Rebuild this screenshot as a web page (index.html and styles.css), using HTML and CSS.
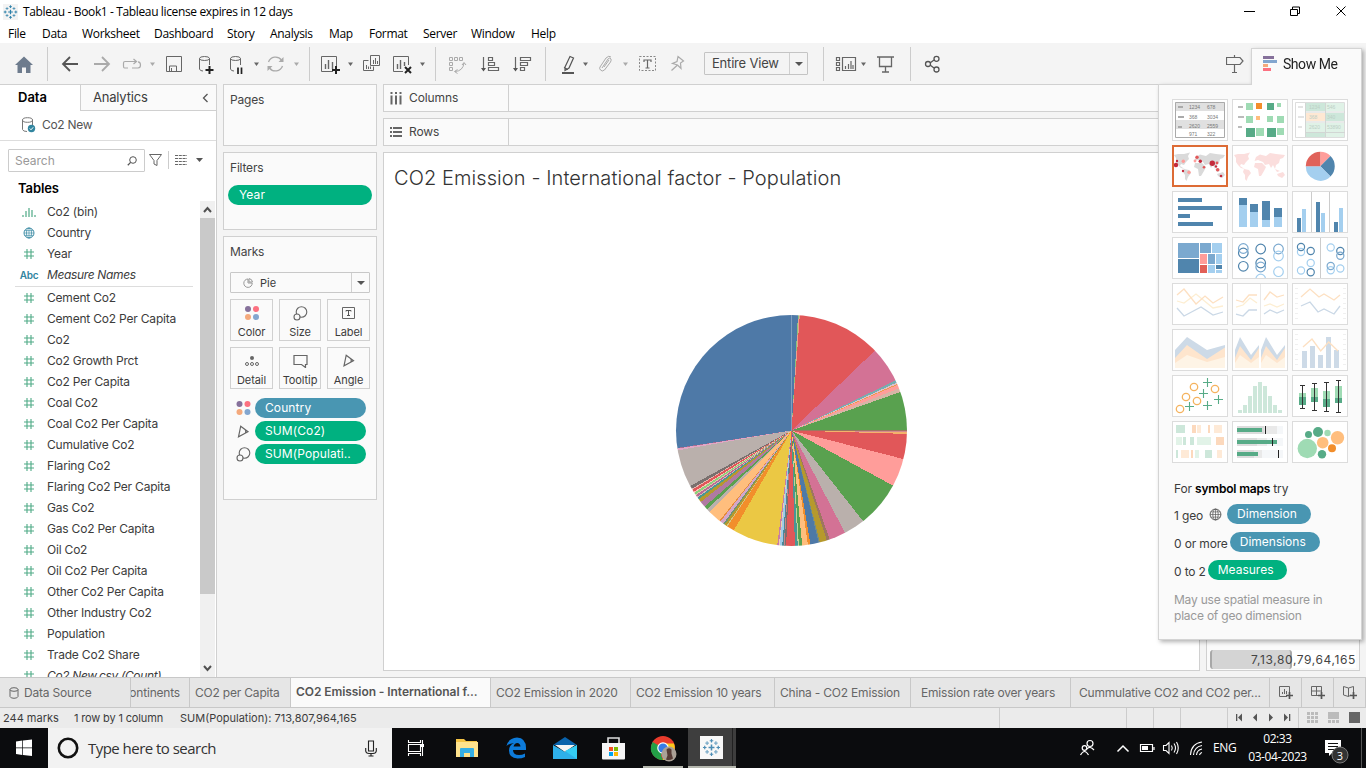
FILE: index.html
```html
<!DOCTYPE html>
<html lang="en">
<head>
<meta charset="utf-8">
<title>Tableau - Book1</title>
<link rel="stylesheet" href="styles.css">
</head>
<body>
<svg class="defs" width="0" height="0">
  <defs>
    <symbol id="hash" viewBox="0 0 12 12"><path d="M4 1v10M8 1v10M1 4h10M1 8h10" stroke="#4faa86" stroke-width="1.1" fill="none"/></symbol>
    <symbol id="globe" viewBox="0 0 12 12"><g fill="none" stroke="currentColor" stroke-width=".9"><circle cx="6" cy="6" r="5"/><ellipse cx="6" cy="6" rx="2.500" ry="5" stroke-width=".7"/><path d="M6 1v10M1 6h10M1.700 3.600h8.600M1.700 8.400h8.600" stroke-width=".6"/></g></symbol>
    <symbol id="dots" viewBox="0 0 14 14"><circle cx="3" cy="3" r="3" fill="#86719b"/><circle cx="11" cy="3" r="3" fill="#fc7181"/><circle cx="3" cy="11" r="3" fill="#f4a97c"/><circle cx="11" cy="11" r="3" fill="#83a6cf"/></symbol>
    <symbol id="size" viewBox="0 0 15 15"><g fill="#fafafa" stroke="#666" stroke-width="1.1"><circle cx="8.500" cy="6" r="5.300"/><circle cx="4" cy="11" r="3"/></g></symbol>
    <symbol id="angle" viewBox="0 0 12 13"><path d="M3.200 1.200L10.500 6.700L1 11.800ZM7.500 4.500Q8.700 6 8 8" fill="none" stroke="#666" stroke-width="1.200"/></symbol>
    <symbol id="logo" viewBox="0 0 16 16"><g stroke="currentColor" fill="none"><path d="M8 5.500v5M5.500 8h5" stroke-width="1.300"/><path d="M8 .8v3M6.500 2.300h3M8 12.200v3M6.500 13.700h3M.8 8h3M2.300 6.500v3M12.200 8h3M13.700 6.500v3" stroke-width="1"/><path d="M4.300 2.800v3M2.800 4.300h3M11.700 2.800v3M10.200 4.300h3M4.300 10.200v3M2.800 11.700h3M11.700 10.200v3M10.200 11.700h3" stroke-width="1" opacity=".75"/></g></symbol>
    <symbol id="world" viewBox="0 0 56 42"><path d="M2 10L6 9L12 9L16 11L17 14L14 17L12 20L9 19L8 21L11 23L13 24L9 23L6 20L4 17L4 13ZM12 9L18 7.500L16 11ZM12 24L17 25L19 28L16 32L14.500 36L13 34L13 30L11 27ZM23 18L30 18L34 22L32 26L29 31L27 31L26 24L22 22ZM22.500 16L24 12L28 9.500L34 11L38 8L44 9L53 10L51 13L48 14L47 18L44 20L43 24L41 20L39 23L37 19L33 20L31 17L26 15ZM45 29L51 27L53 30L50 33L46 31ZM43 24L48 26L45 27Z" fill="currentColor"/></symbol>
  </defs>
</svg>

<header class="titlebar">
  <svg class="applogo" width="15" height="16" viewBox="0 0 16 16"><use href="#logo"/></svg>
  <span class="apptitle">Tableau - Book1 - Tableau license expires in 12 days</span>
  <svg class="winctl" width="130" height="22" viewBox="1236 0 130 22"><g fill="none" stroke="#000"><path d="M1244 10.500h11M1290.500 8.500h7v6h-7zM1292.500 8v-2h7v6.500h-2M1336.500 5.500l9 9M1345.500 5.500l-9 9"/></g></svg>
</header>
<nav class="menu"><span>File</span><span>Data</span><span>Worksheet</span><span>Dashboard</span><span>Story</span><span>Analysis</span><span>Map</span><span>Format</span><span>Server</span><span>Window</span><span>Help</span></nav>

<div class="toolbar">
  <svg width="47" height="41" viewBox="0 43 47 41"><path d="M15 65L24 56.500L33 65H30.500V73H26V67.500H22V73H17.500V65Z" fill="#6d7b8d"/></svg>
  <i class="sep"></i>
  <svg width="261" height="41" viewBox="48 43 261 41">
    <g fill="none" stroke="#555" stroke-width="1.800"><path d="M78 64H63M70 57L63 64L70 71"/></g>
    <g fill="none" stroke="#aaa" stroke-width="1.800"><path d="M94 64H109M102 57L109 64L102 71"/><path d="M128 68H124.500Q123.500 68 123.500 66V63Q123.500 61.500 125 61.500H136M133.500 59L136.500 61.500L133.500 64M138 61.800Q140.500 62 140.500 65Q140.500 68 138 68H132" stroke-width="1.200"/></g>
    <path d="M150 62.500h5l-2.500 3.500z" fill="#aaa"/>
    <path d="M166.500 56.500h15v15h-15zM169.500 71v-5h7v5M171.500 71v-3" fill="none" stroke="#666"/>
    <g fill="none" stroke="#666"><ellipse cx="204.500" cy="58.500" rx="5" ry="2"/><path d="M199.500 58.500V69Q200 71 203 71M209.500 58.500V65"/><path d="M209.500 66v8M205.500 70h8" stroke="#222" stroke-width="2"/>
    <ellipse cx="235.500" cy="58.500" rx="5" ry="2"/><path d="M230.500 58.500V69Q231 71 234 71M240.500 58.500V65"/><path d="M238 67.500v6.500M241.500 67.500v6.500" stroke="#222" stroke-width="1.700"/></g>
    <path d="M254 62.500h5l-2.500 3.500z" fill="#666"/>
    <g fill="none" stroke="#aaa" stroke-width="1.300"><path d="M268.500 62A7.500 7.500 0 0 1 281.500 60M282.500 66A7.500 7.500 0 0 1 269.500 68"/></g><path d="M278.500 62h5v-5zM267.500 66h5l-5 5z" fill="#aaa"/>
    <path d="M294 62.500h5l-2.500 3.500z" fill="#aaa"/>
  </svg>
  <i class="sep"></i>
  <svg width="125" height="41" viewBox="310 43 125 41">
    <g fill="none" stroke="#666"><path d="M333 71.500H321.500V56.500H336.500V67"/><path d="M325.500 69v-5M328.500 69v-9M332.500 69v-7" stroke-width="1.400"/><path d="M336 66v8M332 70h8" stroke="#222" stroke-width="2"/>
    <path d="M370.500 55.500h9v10h-9zM368.500 60.500h-5v10h10v-4M366.500 69v-4M368.500 69v-2.500M370.500 69v-2.500M373.500 64v-4M375.500 64v-6M377.500 64v-3"/>
    <path d="M403 71.500H393.500V56.500H408.500V65"/><path d="M397.500 69v-5M400.500 69v-9M404.500 66v-4" stroke-width="1.400"/><path d="M405 67l6 6M411 67l-6 6" stroke="#222" stroke-width="2"/></g>
    <path d="M348 62.500h5l-2.500 3.500zM420 62.500h5l-2.500 3.500z" fill="#666"/>
  </svg>
  <i class="sep"></i>
  <svg width="109" height="41" viewBox="436 43 109 41">
    <g fill="none" stroke="#aaa"><path d="M449.500 57.500h3v3h-3zM454.500 57.500h3v3h-3zM459.500 57.500h3v3h-3zM449.500 62.500h3v3h-3zM449.500 67.500h3v3h-3zM464 63Q463 71 455 71.500M462 65l2-2.500l2 2.500M457.500 69.500l-3 2l3 2"/></g>
    <g fill="none" stroke="#666"><path d="M483.500 57v13M488.500 57.500h4v3h-4zM488.500 62.500h6v3h-6zM488.500 67.500h10v3h-10z" stroke-width="1.200"/><path d="M515.500 57v13M520.500 57.500h10v3h-10zM520.500 62.500h7v3h-7zM520.500 67.500h4v3h-4z" stroke-width="1.200"/></g>
    <path d="M481 68h5l-2.500 3.500zM513 68h5l-2.500 3.500z" fill="#555"/>
  </svg>
  <i class="sep"></i>
  <svg width="158" height="41" viewBox="546 43 158 41">
    <path d="M565 67L570 56.500L573.500 58L569 68L565 70.500ZM564 67.500L568 69.500" fill="none" stroke="#555" stroke-width="1.200"/><path d="M562 72h12v2h-12z" fill="#555"/>
    <path d="M583 62.500h5l-2.500 3.500z" fill="#666"/><path d="M623 62.500h5l-2.500 3.500z" fill="#aaa"/>
    <path d="M602 68L608 59Q610 57 611 59Q611.500 60 610.500 62L604.500 70Q602 72 600.500 70Q599 68.500 600 67L606 58Q609 55 611 57M604 67L609 60" fill="none" stroke="#aaa"/>
    <path d="M639.500 56.500h16v14h-16z" fill="none" stroke="#888" stroke-dasharray="2 1.500"/><path d="M644 62v-2h7v2M647.500 60v8M645.500 68h4" fill="none" stroke="#666" stroke-width="1.200"/>
    <path d="M678 56.500L683.500 61L680.500 63L681 68.500L677.500 65L672.500 63.500L677 61.500ZM677 65.500L671.500 70.500" fill="none" stroke="#aaa" stroke-width="1.200"/>
  </svg>
  <div class="fit"><span>Entire View</span><b><i class="caret"></i></b></div>
  <svg width="15" height="41"></svg>
  <i class="sep"></i>
  <svg width="86" height="41" viewBox="824 43 86 41">
    <g fill="none" stroke="#666" stroke-width="1.200"><path d="M836.500 57.500h3v3h-3zM836.500 62.500h3v3h-3zM836.500 67.500h3v3h-3zM842.500 57.500h13v13h-13zM845.500 69v-3M848.500 69v-5M851 69v-8M853 69v-4"/><path d="M877 57h17M879.500 57.500v9h12v-9M885.500 67v5M882 72h7" stroke-width="1.300"/></g>
    <path d="M861 62.500h5l-2.500 3.500z" fill="#666"/>
  </svg>
  <i class="sep"></i>
  <svg width="315" height="41" viewBox="911 43 315 41"><g fill="none" stroke="#555" stroke-width="1.300"><path d="M930 63L934 60M930 65L934 68"/><circle cx="928" cy="64" r="2.500"/><circle cx="936.500" cy="58.800" r="2.500"/><circle cx="936.500" cy="69.500" r="2.500"/></g></svg>
  <svg width="24" height="41" viewBox="1226 43 24 41"><path d="M1226.500 57.500H1240L1243 61L1240 64.500H1226.500ZM1234.500 55v2.500M1234.500 65v7M1232 72.500h5" fill="none" stroke="#666" stroke-width="1.200"/></svg>
</div>

<main class="work">
  <aside class="data">
    <div class="ptabs"><b>Data</b><span>Analytics<svg width="7" height="10" viewBox="0 0 7 10"><path d="M5.500 1L1.500 5L5.500 9" fill="none" stroke="#555" stroke-width="1.300"/></svg></span></div>
    <div class="source"><svg width="14" height="16" viewBox="0 0 14 16"><g fill="none" stroke="#777"><ellipse cx="5.500" cy="3" rx="5" ry="2.300"/><path d="M.5 3v9.500Q1 14.500 5 14.500M10.500 3v5"/></g><circle cx="9.500" cy="11.500" r="3.700" fill="#31859f"/><path d="M7.800 11.500l1.200 1.300l2.200-2.500" fill="none" stroke="#fff"/></svg><span>Co2 New</span></div>
    <div class="find">
      <div class="box"><span>Search</span><svg width="10" height="10" viewBox="0 0 10 10"><circle cx="6" cy="4" r="3.300" fill="none" stroke="#555"/><path d="M3.600 6.400L.8 9.200" stroke="#555" stroke-width="1.300"/></svg></div>
      <svg width="71" height="20" viewBox="145 150 71 20"><path d="M149.500 153.500h12l-4.500 6v5l-3-1.500v-3.500z" fill="none" stroke="#666"/><path d="M168.500 150v18" stroke="#ccc"/><path d="M175 154.500h12M175 157.500h12M175 160.500h12M175 163.500h12" stroke="#666" stroke-width="1.200" stroke-dasharray="3 .8"/><path d="M196 157h7l-3.500 4z" fill="#555"/></svg>
    </div>
    <h3>Tables</h3>
    <div class="scroller">
      <ul class="fields">
        <li><svg width="14" height="12" viewBox="0 0 14 12"><path d="M1 11V9M4 11V5M7 11V2M10 11V4M13 11V9" stroke="#4faa86" stroke-width="1.200"/></svg>Co2 (bin)</li>
        <li class="geo"><svg width="12" height="12"><use href="#globe"/></svg>Country</li>
        <li><svg width="12" height="12"><use href="#hash"/></svg>Year</li>
        <li class="names"><b>Abc</b><em>Measure Names</em></li>
        <li><svg width="12" height="12"><use href="#hash"/></svg>Cement Co2</li>
        <li><svg width="12" height="12"><use href="#hash"/></svg>Cement Co2 Per Capita</li>
        <li><svg width="12" height="12"><use href="#hash"/></svg>Co2</li>
        <li><svg width="12" height="12"><use href="#hash"/></svg>Co2 Growth Prct</li>
        <li><svg width="12" height="12"><use href="#hash"/></svg>Co2 Per Capita</li>
        <li><svg width="12" height="12"><use href="#hash"/></svg>Coal Co2</li>
        <li><svg width="12" height="12"><use href="#hash"/></svg>Coal Co2 Per Capita</li>
        <li><svg width="12" height="12"><use href="#hash"/></svg>Cumulative Co2</li>
        <li><svg width="12" height="12"><use href="#hash"/></svg>Flaring Co2</li>
        <li><svg width="12" height="12"><use href="#hash"/></svg>Flaring Co2 Per Capita</li>
        <li><svg width="12" height="12"><use href="#hash"/></svg>Gas Co2</li>
        <li><svg width="12" height="12"><use href="#hash"/></svg>Gas Co2 Per Capita</li>
        <li><svg width="12" height="12"><use href="#hash"/></svg>Oil Co2</li>
        <li><svg width="12" height="12"><use href="#hash"/></svg>Oil Co2 Per Capita</li>
        <li><svg width="12" height="12"><use href="#hash"/></svg>Other Co2 Per Capita</li>
        <li><svg width="12" height="12"><use href="#hash"/></svg>Other Industry Co2</li>
        <li><svg width="12" height="12"><use href="#hash"/></svg>Population</li>
        <li><svg width="12" height="12"><use href="#hash"/></svg>Trade Co2 Share</li>
        <li><svg width="12" height="12"><use href="#hash"/></svg><em>Co2 New.csv (Count)</em></li>
      </ul>
      <div class="sbar"><svg width="15" height="17" viewBox="0 0 15 17"><path d="M4 11L7.500 7L11 11" fill="none" stroke="#505050" stroke-width="2"/></svg><i></i><svg width="15" height="17" viewBox="0 0 15 17"><path d="M4 6L7.500 10L11 6" fill="none" stroke="#505050" stroke-width="2"/></svg></div>
    </div>
  </aside>

  <section class="cards">
    <div class="card pages"><h4>Pages</h4></div>
    <div class="card filters"><h4>Filters</h4><div class="pill green">Year</div></div>
    <div class="card marks"><h4>Marks</h4>
      <div class="mtype"><svg width="10" height="10" viewBox="0 0 10 10"><path d="M5 1A4.200 4.200 0 1 0 9.200 5H5ZM6 .6A4 4 0 0 1 9.500 4H6Z" fill="none" stroke="#999"/></svg><span>Pie</span><b><i class="caret"></i></b></div>
      <div class="mgrid">
        <div><svg width="14" height="14"><use href="#dots"/></svg>Color</div>
        <div><svg width="15" height="15"><use href="#size"/></svg>Size</div>
        <div><svg width="14" height="14" viewBox="0 0 14 14"><path d="M.5 1.500h12v11H.5z" fill="none" stroke="#666"/><path d="M4 5.500v-1h5v1M6.500 4.500v5M5 9.500h3" fill="none" stroke="#555"/></svg>Label</div>
        <div><svg width="14" height="14" viewBox="0 0 14 14"><circle cx="7" cy="4" r="2" fill="#666"/><g fill="none" stroke="#666"><circle cx="2" cy="10" r="1.500"/><circle cx="7" cy="10" r="1.500"/><circle cx="12" cy="10" r="1.500"/></g></svg>Detail</div>
        <div><svg width="15" height="14" viewBox="0 0 15 14"><path d="M1 1.500h13v9h-1.500v3l-4-3H1z" fill="none" stroke="#666" stroke-width="1.200"/></svg>Tooltip</div>
        <div><svg width="12" height="13"><use href="#angle"/></svg>Angle</div>
      </div>
      <div class="enc"><svg width="14" height="14"><use href="#dots"/></svg><div class="pill blue">Country</div></div>
      <div class="enc"><svg width="12" height="13"><use href="#angle"/></svg><div class="pill green">SUM(Co2)</div></div>
      <div class="enc"><svg width="15" height="15"><use href="#size"/></svg><div class="pill green">SUM(Populati..</div></div>
    </div>
  </section>

  <section class="view">
    <div class="shelf"><span><svg width="12" height="13" viewBox="0 0 12 13"><path d="M1.500 0v2M1.500 3.500v9M6 0v2M6 3.500v9M10.500 0v2M10.500 3.500v9" stroke="#666" stroke-width="2"/></svg>Columns</span></div>
    <div class="shelf"><span><svg width="12" height="12" viewBox="0 0 12 12"><path d="M0 2h2M3 2h9M0 6h2M3 6h9M0 10h2M3 10h9" stroke="#666" stroke-width="2"/></svg>Rows</span></div>
    <div class="lower">
      <div class="canvas"><h1>CO2 Emission - International factor - Population</h1><div class="pie"></div></div>
      <div class="legend"><div class="slider"><i></i><span>7,13,80,79,64,165</span></div></div>
    </div>
  </section>
</main>

<div class="sheets">
  <div class="ds"><svg width="10" height="12" viewBox="0 0 10 12"><g fill="none" stroke="#666"><ellipse cx="5" cy="2.500" rx="4" ry="1.800"/><path d="M1 2.500v7Q1.500 11.300 5 11.300T9 9.500v-7"/></g></svg>Data Source</div>
  <div class="cut"><span>Continents</span></div><div>CO2 per Capita</div><div class="on">CO2 Emission - International f...</div><div>CO2 Emission in 2020</div><div>CO2 Emission 10 years</div><div>China - CO2 Emission</div><div class="rate">Emission rate over years</div><div class="cum">Cummulative CO2 and CO2 per...</div>
  <div class="add"><svg width="16" height="16" viewBox="0 0 16 16"><path d="M9 12.500H1.500V2.500H11.500V8M4.500 10V8M6.500 10V5M8.500 10V7" fill="none" stroke="#666"/><path d="M11.500 8v7M8 11.500h7" stroke="#555" stroke-width="1.700"/></svg></div>
  <div class="add"><svg width="16" height="16" viewBox="0 0 16 16"><path d="M9 11.500H1.500V2.500H11.500V8M6.500 2.500v9M1.500 7H11.500" fill="none" stroke="#666"/><path d="M11.500 8v7M8 11.500h7" stroke="#555" stroke-width="1.700"/></svg></div>
  <div class="add"><svg width="16" height="16" viewBox="0 0 16 16"><path d="M9 11L6.500 12.500L1.500 11V2.500L6.500 4L11.500 2.500V8M6.500 4v8.500" fill="none" stroke="#666"/><path d="M11.500 8v7M8 11.500h7" stroke="#555" stroke-width="1.700"/></svg></div>
</div>

<div class="status"><span>244 marks</span><span>1 row by 1 column</span><span class="sum">SUM(Population): 713,807,964,165</span>
  <i></i><i></i><i></i><i></i><i></i>
  <svg width="138" height="20" viewBox="1228 708 138 20"><path d="M1298.500 708v20" stroke="#ccc"/><path d="M1236 714h1.300v7h-1.300zM1242 713.500v8l-4-4zM1257 713.500v8l-4-4zM1269 713.500v8l4-4zM1284 713.500v8l4-4zM1289 714h1.300v7h-1.300z" fill="#555"/><path d="M1307 712h3v3h-3zM1311 712h3v3h-3zM1315 712h3v3h-3zM1307 716h3v3h-3zM1311 716h3v3h-3zM1315 716h3v3h-3zM1307 720h3v3h-3zM1311 720h3v3h-3zM1315 720h3v3h-3zM1328 712h11v7h-11zM1328 720h3v3h-3zM1332 720h3v3h-3zM1336 720h3v3h-3z" fill="#bbb"/><path d="M1349 712h11v11h-11z" fill="#666"/></svg>
</div>

<footer class="taskbar">
  <svg width="48" height="40" viewBox="0 728 48 40"><path d="M16 741.500L22.300 740.500V747.500H16ZM23 740.400L32 739.500V747.500H23ZM16 748.300H22.300V755L16 754ZM23 748.300H32V756L23 755.100Z" fill="#fff"/></svg>
  <div class="search"><svg width="22" height="22" viewBox="0 0 22 22"><circle cx="11" cy="11" r="9.200" fill="none" stroke="#111" stroke-width="2.600"/></svg><span>Type here to search</span><svg width="12" height="17" viewBox="0 0 12 17"><path d="M3.500 1h5v10h-5zM.7 8v3Q1 13.500 4 13.500H8Q11 13.500 11.300 11V8M6 13.500V16M3.500 16h5" fill="none" stroke="#222" stroke-width="1.100"/></svg></div>
  <svg width="344" height="40" viewBox="392 728 344 40">
    <g fill="none" stroke="#fff"><path d="M408.500 740v2.500h12V740M408.500 744.500h12v7h-12zM408.500 756v-2.500h12v2.500M422.500 740v16" stroke-width="1.100"/></g><path d="M421 744h3v3h-3z" fill="#fff"/>
    <path d="M456 739h8l2 2h11v16h-21z" fill="#f5c445"/><path d="M456 742h22v15h-22z" fill="#ffe38d"/><path d="M460 757v-8q0-1 1-1h12q1 0 1 1v8h-4v-4h-6v4z" fill="#35afe5"/>
    <path d="M506.500 746Q508.500 738 517 737.500Q526 738 526 748V750H513Q513 755 519 755Q522 755 525 753.500V757Q522 758.500 517.500 758.500Q509 758 509 750.500Q509 745 514 743Q509 743.500 506.500 746ZM513.500 746.500H520.500Q520 743 517.300 743Q514.500 743 513.500 746.500Z" fill="#0d7bda"/>
    <path d="M553 745L565 737L577 745Z" fill="#0962ab"/><path d="M555 745h20l-10 7z" fill="#f4f4f4"/><path d="M553 745L565 752L577 745V759H553Z" fill="#2eb0ea"/><path d="M565 751L577 745V759Z" fill="#34cdf4"/>
    <path d="M602 743h23v15.500q0 1-1 1h-21q-1 0-1-1z" fill="#f6f6f6"/><path d="M608 743v-5h11v5" fill="none" stroke="#ddd" stroke-width="1.600"/><path d="M609 747h4v4h-4z" fill="#f25022"/><path d="M614 747h4v4h-4z" fill="#7fba00"/><path d="M609 752h4v4h-4z" fill="#00a4ef"/><path d="M614 752h4v4h-4z" fill="#ffb900"/>
    <circle cx="663" cy="748" r="12" fill="#e93b2c"/><path d="M652.600 742L663 748L660 759.600A12 12 0 0 1 652.600 742Z" fill="#23a047"/><path d="M663 743.500H674A12 12 0 0 1 662 760L668 750Z" fill="#fbc91b"/><path d="M651.500 746L660 753L663 760A12 12 0 0 1 651 746Z" fill="#23a047"/><circle cx="663" cy="748" r="5.800" fill="#fff"/><circle cx="663" cy="748" r="4.600" fill="#367be6"/><circle cx="669" cy="754" r="7.500" fill="#aaa096"/><path d="M666.500 749.500q2.500-2.500 5 0v4l1.500 5q-3.500 2.500-7 1l1.500-4z" fill="#563b35"/>
    <path d="M643 766h40v2h-40zM688 766h48v2h-48z" fill="#b5b7ae"/><path d="M688 728h48v38h-48z" fill="#3e3e3e"/><path d="M732.500 728v38" stroke="#222"/><path d="M700 736h23v23h-23z" fill="#f8f8f8"/>
    <svg x="702" y="738" width="19" height="19" viewBox="0 0 16 16" color="#4b8db5"><use href="#logo"/></svg>
  </svg>
  <span class="gap"></span>
  <svg width="134" height="40" viewBox="1076 728 134 40"><g fill="none" stroke="#fff" stroke-width="1.200"><circle cx="1090" cy="743.500" r="3"/><path d="M1087 749Q1090 745.500 1094 750"/><circle cx="1084.500" cy="748" r="2.300"/><path d="M1080.500 755Q1084.500 748 1088.500 755"/><path d="M1117.500 751.500L1123 746L1128.500 751.500" stroke-width="1.500"/><path d="M1140.500 744.500h12v7h-12zM1154 747v3"/><path d="M1163.500 745.500h2.500l3-3v11l-3-3h-2.500zM1171.500 745.500Q1173 748 1171.500 750.500M1174 743.500Q1177 748 1174 752.500M1176.500 742Q1180 748 1176.500 754" stroke-width="1.100"/><path d="M1190.500 755Q1191 743.500 1202 742M1193.500 755Q1194 747 1202 745.500M1196.500 755Q1197 750 1202 749M1199.500 755Q1200 753 1202 752.500" stroke-width="1.100"/></g><path d="M1142 746h6v4h-6z" fill="#fff"/></svg>
  <span class="lang">ENG</span>
  <div class="clock"><span>02:33</span><span>03-04-2023</span></div>
  <svg width="50" height="40" viewBox="1316 728 50 40"><path d="M1325 740h16v13h-9l-3 3v-3h-4z" fill="#fff"/><path d="M1328 743.500h10M1328 746.500h10M1328 749.500h8" stroke="#111"/><circle cx="1340" cy="755" r="8" fill="#333" stroke="#777"/><path d="M1361.500 728v40" stroke="#555"/><text x="1340" y="759.500" text-anchor="middle" class="badge">3</text></svg>
</footer>

<div class="showme">
  <div class="smtab"><svg width="14" height="15" viewBox="0 0 14 15"><path d="M0 0h11v3H0z" fill="#86719b"/><path d="M0 4h14v3H0z" fill="#83a6cf"/><path d="M0 8h5v3H0z" fill="#f4a97c"/><path d="M0 12h8v3H0z" fill="#fc7181"/></svg>Show Me</div>
  <div class="smbody">
    <div class="thumbs">
      <div><svg viewBox="1 1 54 40"><path d="M3 3h50v9H3zM3 21h50v9H3z" fill="#e0e0e0"/><path d="M3.500 3.500h49v35h-49z" fill="none" stroke="#aaa"/><path d="M6 7h5v2H6zM6 17h6v2H6zM6 27h4v2H6z" fill="#aaa"/><g class="num"><text x="17" y="10">1234</text><text x="35" y="10">678</text><text x="17" y="19.500">368</text><text x="35" y="19.500">3034</text><text x="17" y="28.500">2620</text><text x="35" y="28.500">2559</text><text x="17" y="36.500">971</text><text x="35" y="36.500">322</text></g></svg></div>
      <div><svg viewBox="1 1 54 40"><path d="M6 7h5v2H6zM6 17h6v2H6zM6 27h4v2H6z" fill="#bbb"/><path d="M14 4h7v7h-7zM45 4h4v4h-4zM14 17h7v7h-7zM35 17h6v6h-6zM45 17h7v7h-7zM24 29h8v8h-8zM45 29h7v7h-7z" fill="#9fdbb4"/><path d="M35 4h7v7h-7zM14 29h9v9h-9zM35 29h9v9h-9z" fill="#57ab87"/><path d="M24 4h6v6h-6z" fill="#f28e2b"/><path d="M24 17h4v4h-4z" fill="#ffbe7d"/></svg></div>
      <div><svg viewBox="1 1 54 40"><path d="M3.500 3.500h49v35h-49z" fill="none" stroke="#ddd"/><path d="M6 7h5v2H6zM6 17h6v2H6zM6 27h4v2H6z" fill="#e4e4e4"/><path d="M14 4h19v8H14zM34 14h18v8H34zM14 34h19v4H14z" fill="#cde7da"/><path d="M34 4h18v8H34zM14 24h19v9H14zM34 24h18v9H34zM34 34h18v4H34z" fill="#e0f2e7"/><path d="M14 14h19v8H14z" fill="#fee8d3"/><path d="M13.500 4v34M33.500 4v34M13 13h40M13 23h40M13 33.500h40" stroke="#d2d6d4" fill="none"/><g class="num pale"><text x="17" y="10">1234</text><text x="35" y="10">546</text><text x="17" y="20">368</text><text x="35" y="20">340</text><text x="17" y="30">2620</text><text x="35" y="30">53890</text></g></svg></div>
      <div class="sel"><svg viewBox="1 1 54 40"><g color="#dadada"><use href="#world" width="56" height="42"/></g><g fill="#c52b3c"><circle cx="4" cy="20" r="2.200"/><circle cx="5" cy="16" r="1.200"/><circle cx="11" cy="26" r="1.200"/><circle cx="28.300" cy="16.300" r="1.700"/><circle cx="40.300" cy="18.300" r="2.700"/><circle cx="44" cy="21.500" r="1.200"/><circle cx="49" cy="31" r="1.300"/></g><g fill="#e15759"><circle cx="25" cy="12.300" r="1.700"/><circle cx="32" cy="22.300" r="1.300"/><circle cx="45" cy="18" r="1.400"/><circle cx="45.700" cy="24.700" r="1.800"/></g><g fill="#ff9d9a"><circle cx="11.300" cy="16.300" r="1.700"/><circle cx="17" cy="27.300" r="1.700"/><circle cx="23" cy="16" r="1.400"/></g></svg></div>
      <div><svg viewBox="1 1 54 40"><g color="#fbdedd"><use href="#world" width="56" height="42"/></g></svg></div>
      <div><svg viewBox="1 1 54 40"><path d="M28.300 21.300V6.800A14.500 14.500 0 0 1 38.500 11Z" fill="#ff9d9a"/><path d="M28.300 21.300L38.500 11A14.500 14.500 0 0 1 38.500 31.500Z" fill="#5085ad"/><path d="M28.300 21.300L38.500 31.500A14.500 14.500 0 0 1 13.800 21.300Z" fill="#a4cfef"/><path d="M28.300 21.300H13.800A14.500 14.500 0 0 1 28.300 6.800Z" fill="#e0625a"/></svg></div>
      <div><svg viewBox="1 1 54 40"><path d="M6 7h24v4H6zM6 15h44v4H6zM6 23h12v4H6zM6 31h35v4H6z" fill="#5085ad"/></svg></div>
      <div><svg viewBox="1 1 54 40"><path d="M7 7h8v7H7zM18 13h8v8h-8zM30 10h8v19h-8zM42 17h8v9h-8z" fill="#5085ad"/><path d="M7 14h8v22H7zM18 21h8v15h-8zM30 29h8v7h-8zM42 26h8v10h-8z" fill="#a4cfef"/></svg></div>
      <div><svg viewBox="1 1 54 40"><path d="M19.500 1v40M37.500 1v40" stroke="#ccc"/><path d="M5 27h4v14H5zM24 11h4v30h-4zM42 31h4v10h-4z" fill="#5085ad"/><path d="M10 18h4v23h-4zM29 22h4v19h-4zM47 17h4v24h-4z" fill="#a4cfef"/></svg></div>
      <div><svg viewBox="1 1 54 40"><path d="M6 6h21v15H6zM28 6h11v10H28zM36 17h7v10h-7z" fill="#7ba9cf"/><path d="M6 22h21v14H6zM44 28h6v4h-6z" fill="#5085ad"/><path d="M40 6h10v10H40zM44 17h6v10h-6zM36 28h7v8h-7zM44 33h6v3h-6z" fill="#a4cfef"/><path d="M28 17h7v10h-7z" fill="#ff9d9a"/><path d="M28 28h7v8h-7z" fill="#e15f57"/></svg></div>
      <div><svg viewBox="1 1 54 40"><g fill="none" stroke-width="1.200"><g stroke="#5085ad"><circle cx="11.300" cy="16" r="4.800"/><circle cx="11.300" cy="29.300" r="4.800"/><circle cx="28.700" cy="12" r="4.800"/><circle cx="28.700" cy="26" r="4.800"/></g><g stroke="#7ba9cf"><circle cx="11.300" cy="11.500" r="4.800"/><circle cx="28.700" cy="30" r="4.800"/><circle cx="46.500" cy="12" r="4.800"/></g><g stroke="#a4cfef"><circle cx="28.700" cy="42" r="4.800"/><circle cx="46.500" cy="19" r="4.800"/><circle cx="46.500" cy="34.700" r="4.800"/></g></g></svg></div>
      <div><svg viewBox="1 1 54 40"><path d="M28.500 1v40" stroke="#ccc"/><g fill="none" stroke-width="1.200"><g stroke="#a4cfef"><circle cx="9" cy="15" r="3.600"/><circle cx="18.700" cy="26" r="3.600"/><circle cx="9" cy="33.500" r="3.600"/><circle cx="38.700" cy="10.500" r="3.600"/><circle cx="38.700" cy="33.300" r="3.600"/><circle cx="48.300" cy="31.500" r="3.600"/></g><g stroke="#5085ad"><circle cx="9" cy="10" r="3.600"/><circle cx="18.700" cy="14" r="3.600"/><circle cx="18.700" cy="35.300" r="3.600"/><circle cx="48.300" cy="14" r="3.600"/></g><g stroke="#7ba9cf"><circle cx="48.300" cy="18.700" r="3.600"/><circle cx="38.700" cy="29" r="3.600"/></g></g></svg></div>
      <div><svg viewBox="1 1 54 40"><g fill="none" stroke-width="1.300"><path d="M5 18L12 20L24 11L41 25L51 23" stroke="#fdeed2"/><path d="M5 12L12 6L24 21L33 13L41 20L51 14" stroke="#fde0c2"/><path d="M5 25L12 33L29 24L41 32L51 29" stroke="#cad8e6"/></g></svg></div>
      <div><svg viewBox="1 1 54 40"><path d="M28.500 1v40" stroke="#e8e8e8"/><g fill="none" stroke-width="1.300"><path d="M4 24L11 22L18 15L25 20M32 23L38 21L45 24L52 21" stroke="#fdeed2"/><path d="M4 17L11 19L17 12L25 12M32 17L38 9L45 14L52 12" stroke="#fde0c2"/><path d="M4 31L11 33L17 27L25 27M32 31L38 27L45 30L52 27" stroke="#cad8e6"/></g></svg></div>
      <div><svg viewBox="1 1 54 40"><path d="M4.500 5v34M52.500 5v34" stroke="#f0f0f0" stroke-width="3" stroke-dasharray="1 4"/><g fill="none" stroke-width="1.300"><path d="M9 14L18 6L27 14L32 11L42 17L48 12" stroke="#fde0c2"/><path d="M9 23L18 19L26 29L32 26L42 31L48 23" stroke="#cad8e6"/></g></svg></div>
      <div><svg viewBox="1 1 54 40"><path d="M3 21L15 8L35 21L53 16V39H3Z" fill="#cddae7"/><path d="M3 29L15 16L35 30L53 18.500V39H3Z" fill="#fee5cd"/><path d="M3 34L15 26L35 33L53 28V39H3Z" fill="#fef4e6"/></svg></div>
      <div><svg viewBox="1 1 54 40"><path d="M3 21L8 8L19 26L27 16V39H3ZM29 21L34 8L45 26L53 16V39H29Z" fill="#cddae7"/><path d="M3 29L8 17L19 31L27 19V39H3ZM29 29L34 17L45 31L53 19V39H29Z" fill="#fee5cd"/><path d="M3 34L8 26L19 34L27 28V39H3ZM29 34L34 26L45 34L53 28V39H29Z" fill="#fef4e6"/></svg></div>
      <div><svg viewBox="1 1 54 40"><path d="M4.500 5v34M52.500 5v34" stroke="#f0f0f0" stroke-width="3" stroke-dasharray="1 4"/><path d="M10 22h5v17h-5zM18 17h5v22h-5zM26 26h5v13h-5zM34 8h5v31h-5zM42 21h5v18h-5z" fill="#cddae7"/><path d="M11 18L20 10L28.700 22L36.700 13L46 22" fill="none" stroke="#fde0c2" stroke-width="1.300"/></svg></div>
      <div><svg viewBox="1 1 54 40"><g fill="none" stroke="#f5b35e" stroke-width="1.300"><circle cx="22" cy="12" r="3.700"/><circle cx="43" cy="14" r="3.700"/><circle cx="14" cy="22" r="3.700"/><circle cx="25" cy="26" r="3.700"/><circle cx="8" cy="34" r="3.700"/></g><path d="M35.500 3v9M31 7.500h9M31.500 14v9M27 18.500h9M46.500 20v9M42 24.500h9M17.500 27v9M13 31.500h9M35.500 26v9M31 30.500h9" stroke="#57ab87" stroke-width="1.100"/></svg></div>
      <div><svg viewBox="1 1 54 40"><path d="M6 35h4v3H6zM11 30h4v8h-4zM16 21h4v17h-4zM21 11h4v27h-4zM26 7h4v31h-4zM31 11h4v27h-4zM36 21h4v17h-4zM41 30h4v8h-4zM46 35h4v3h-4z" fill="#cde7da"/></svg></div>
      <div><svg viewBox="1 1 54 40"><path d="M7 18h7v4H7zM19 13h7v9h-7zM31 16h7v8h-7zM43 11h7v12h-7z" fill="#9fdbb4"/><path d="M7 22h7v8H7zM19 22h7v5h-7zM31 24h7v8h-7zM43 23h7v5h-7z" fill="#57ab87"/><path d="M10.500 10v23M8 10.500h5M8 33.500h5M22.500 8v28M20 8.500h5M20 35.500h5M34.500 7v30M32 7.500h5M32 36.500h5M46.500 5v33M44 5.500h5M44 37.500h5" stroke="#333"/></svg></div>
      <div><svg viewBox="1 1 54 40"><path d="M4 4h9v8H4zM11 16h3v8h-3zM18 16h4v8h-4zM4 29h2v8H4zM33 29h7v8h-7z" fill="#cde7da"/><path d="M4 16h6v8H4zM25 16h14v8H25zM23 29h4v8h-4z" fill="#e2f3e8"/><path d="M20 4h4v8h-4zM36 4h2v8h-2zM44 16h8v8h-8zM19 29h2v8h-2z" fill="#fcd9bd"/><path d="M25 4h4v8h-4zM42 4h8v8h-8zM9 29h8v8H9zM45 29h5v8h-5z" fill="#feead7"/></svg></div>
      <div><svg viewBox="1 1 54 40"><path d="M5 5h46v8H5zM5 17h46v8H5zM5 29h46v8H5z" fill="#f5f7f9"/><path d="M5 5h40v8H5zM5 17h30v8H5zM5 29h25v8H5z" fill="#e9e9e9"/><path d="M5 5h27v8H5zM5 17h20v8H5zM5 29h17v8H5z" fill="#dcdcdc"/><path d="M5 7h25v4H5zM5 19h40v4H5zM5 31h21v4H5z" fill="#57ab87"/><path d="M33.500 5v8M40.500 17v8M46.500 29v8" stroke="#222"/></svg></div>
      <div><svg viewBox="1 1 54 40"><g fill="#57ab87"><circle cx="16.500" cy="13.500" r="3.500"/><circle cx="26" cy="11" r="5"/><circle cx="30" cy="33.300" r="4.200"/></g><g fill="#9fdbb4"><circle cx="15.300" cy="27.500" r="9.700"/><circle cx="35.500" cy="12" r="3.200"/></g><g fill="#ffbe7d"><circle cx="45.500" cy="16.700" r="6.700"/><circle cx="30.700" cy="21.700" r="5.800"/></g><circle cx="40" cy="27.300" r="4" fill="#f28e2b"/></svg></div>
    </div>
    <div class="hint">
      <p>For <b>symbol maps</b> try</p>
      <div class="req"><span>1 geo</span><svg class="g" width="13" height="13"><use href="#globe"/></svg><div class="pill blue w1">Dimension</div></div>
      <div class="req"><span>0 or more</span><div class="pill blue w2">Dimensions</div></div>
      <div class="req"><span>0 to 2</span><div class="pill green w3">Measures</div></div>
      <p class="note">May use spatial measure in<br>place of geo dimension</p>
    </div>
  </div>
</div>
</body>
</html>
```
FILE: styles.css
```css
* { box-sizing: border-box; }
body { margin: 0; width: 1366px; height: 768px; overflow: hidden; position: relative; display: flex; flex-direction: column; background: #f4f4f4; color: #3c3c3c; font: 12px/16px Inter, "Liberation Sans", sans-serif; }
svg { display: block; flex: none; }
.defs { position: absolute; }
h1, h3, h4, p, ul { margin: 0; padding: 0; font-weight: 400; }
.caret { width: 0; height: 0; border: 4px solid transparent; border-top: 4px solid #555; border-bottom: 0; }

.titlebar { height: 24px; background: #fff; display: flex; align-items: center; flex: none; }
.applogo { margin-left: 3px; color: #2d80aa; background: #f3f3f3; }
.apptitle { margin-left: 5px; flex: 1; color: #000; font: 12px/20px "Open Sans", sans-serif; letter-spacing: -.37px; white-space: nowrap; }
.menu { height: 19px; flex: none; background: #fff; padding-left: 8px; display: grid; grid-template-columns: 34px 40px 72px 73px 43px 59px 40px 54px 48px 60px 40px; color: #000; font: 12px/19px "Open Sans", sans-serif; letter-spacing: -.3px; }

.toolbar { height: 41px; flex: none; display: flex; background: #f4f4f4; }
.sep { width: 1px; height: 34px; margin-top: 4px; background: #ccc; flex: none; }
.fit { width: 104px; height: 23px; margin-top: 9px; border: 1px solid #c4c4c4; border-radius: 1px; display: flex; align-items: center; font-size: 13px; letter-spacing: -.2px; color: #444; }
.fit span { flex: 1; padding: 0 0 1px 7px; white-space: nowrap; }
.fit b, .mtype b { width: 18px; height: 100%; border-left: 1px solid #d0d0d0; display: flex; align-items: center; justify-content: center; }

.work { height: 593px; flex: none; display: flex; }
.data { width: 217px; background: #fff; border-right: 1px solid #d0d0d0; border-top: 1px solid #d0d0d0; display: flex; flex-direction: column; }
.ptabs { display: grid; grid-template-columns: 80px 1fr; height: 26px; line-height: 25px; flex: none; font-size: 13px; letter-spacing: -.2px; }
.ptabs b { padding-left: 18px; color: #000; font-weight: 600; letter-spacing: 0; }
.ptabs span { border-left: 1px solid #d0d0d0; border-bottom: 1px solid #d0d0d0; background: #fafafa; padding: 0 7px 0 12px; display: flex; justify-content: space-between; align-items: center; }
.source { height: 30px; flex: none; display: flex; align-items: center; gap: 6px; padding: 0 0 1px 22px; border-bottom: 1px solid #ddd; color: #555; letter-spacing: -.3px; }
.find { height: 39px; flex: none; display: flex; align-items: center; padding-left: 8px; }
.find .box { width: 137px; height: 23px; border: 1px solid #ccc; border-radius: 1px; display: flex; justify-content: space-between; align-items: center; padding: 0 7px 0 6px; color: #999; }
h3 { font-weight: 600; font-size: 13px; line-height: 16px; padding-left: 18px; color: #000; height: 21px; letter-spacing: -.1px; flex: none; }
.scroller { flex: 1; min-height: 0; display: flex; overflow: hidden; }
.fields { list-style: none; width: 200px; padding-left: 15px; letter-spacing: -.2px; }
.fields li { height: 21px; display: grid; grid-template-columns: 32px 1fr; align-items: center; white-space: nowrap; }
.fields li > svg, .fields li > b { justify-self: center; margin-right: 4px; }
.fields .geo svg { color: #31859f; }
.fields .names { height: 23px; border-bottom: 1px solid #ddd; width: 178px; }
.fields b { font-size: 10px; color: #31859f; font-weight: 600; }
.fields em { letter-spacing: -.35px; }
.sbar { width: 15px; background: #f0f0f0; display: flex; flex-direction: column; justify-content: space-between; }
.sbar i { height: 376px; background: #c9c9c9; margin-bottom: 66px; }

.cards { width: 154px; margin-left: 6px; display: flex; flex-direction: column; gap: 6px; }
.card { border: 1px solid #d0d0d0; background: #fafafa; padding: 7px 4px; }
.card h4 { padding-left: 2px; line-height: 15px; color: #444; letter-spacing: -.2px; }
.pages { height: 62px; }
.filters { height: 78px; }
.marks { height: 264px; }
.pill { height: 20px; border-radius: 10px; color: #fff; line-height: 19px; padding-left: 11px; white-space: nowrap; overflow: hidden; letter-spacing: .1px; }
.green { background: #00b180; }
.blue { background: #4996b2; }
.filters .pill { margin-top: 10px; }
.mtype { margin: 13px 2px 6px; height: 21px; border: 1px solid #c8c8c8; border-radius: 1px; display: flex; align-items: center; padding-left: 12px; font-size: 11px; }
.mtype span { flex: 1; padding-left: 7px; }
.mgrid { display: grid; grid-template-columns: 43px 42px 43px; gap: 6px; margin: 0 2px 9px; }
.mgrid div { height: 42px; border: 1px solid #d0d0d0; font-size: 11px; line-height: 14px; letter-spacing: -.1px; display: flex; flex-direction: column; align-items: center; justify-content: space-between; padding: 6px 0 1px; }
.enc { display: flex; align-items: center; height: 20px; margin-bottom: 3px; padding: 0 6px 0 8px; }
.enc svg { width: 15px; margin-right: 4px; }
.enc .pill { width: 111px; padding-left: 10px; }

.view { flex: 1; margin-left: 6px; display: flex; flex-direction: column; gap: 6px; }
.shelf { height: 28px; border: 1px solid #d0d0d0; background: #fafafa; margin-right: 6px; }
.shelf span { display: flex; align-items: center; gap: 7px; padding-left: 6px; width: 125px; height: 100%; border-right: 1px solid #d0d0d0; color: #444; letter-spacing: -.1px; }
.lower { height: 519px; display: grid; grid-template-columns: 817px 154px; gap: 6px; }
.canvas { background: #fff; border: 1px solid #d0d0d0; }
.canvas h1 { font: 300 20px/24px Inter, sans-serif; letter-spacing: .09px; color: #333; padding: 13px 0 0 10px; white-space: nowrap; }
.pie { width: 231px; height: 231px; margin: 125px 0 0 292px; border-radius: 50%; background: conic-gradient(#7f9dbe 0 .3deg, #4e79a7 0 3.2deg, #8cc17d 0 3.6deg, #e8a08f 0 4.1deg, #e15759 0 46.2deg, #d37295 0 64.3deg, #76aeb0 0 65.5deg, #dfc0cc 0 66.2deg, #f09a4b 0 66.7deg, #ff9d9a 0 68.6deg, #d7b5a6 0 70.5deg, #59a14f 0 89.8deg, #9d7660 0 90.4deg, #d58a90 0 90.9deg, #f3b36b 0 91.7deg, #e15759 0 104.3deg, #ff9d9a 0 118.5deg, #59a14f 0 141.7deg, #bab0ac 0 152.4deg, #d37295 0 160.7deg, #9d7660 0 162.2deg, #b6992d 0 165.8deg, #748c87 0 166.4deg, #4e79a7 0 170.6deg, #f28e2b 0 171.8deg, #ffbe7d 0 174.7deg, #59a14f 0 176.3deg, #bfd39a 0 176.9deg, #499894 0 178.3deg, #e15759 0 182.7deg, #79706e 0 183.5deg, #c78385 0 183.9deg, #4e8796 0 184.6deg, #a0cbe8 0 185.9deg, #eed0b0 0 186.3deg, #c97ca3 0 187.1deg, #ebc844 0 210deg, #f28e2b 0 213.8deg, #d9c47e 0 214.3deg, #b6992d 0 215.4deg, #6c9571 0 216.2deg, #d4a6c8 0 218deg, #e58b39 0 218.6deg, #ffbe7d 0 225.3deg, #bab0ac 0 227deg, #59a14f 0 228.8deg, #b07aa1 0 231.8deg, #b6992d 0 233.5deg, #499894 0 234.5deg, #d4b5bc 0 235deg, #b86b94 0 235.9deg, #e4c6a8 0 236.4deg, #8cd17d 0 237.4deg, #ffc0b7 0 237.9deg, #e15759 0 239.2deg, #e6b6ad 0 239.7deg, #79706e 0 241.3deg, #bab0ac 0 260.1deg, #e2a6c5 0 261deg, #a66d91 0 261.3deg, #4e79a7 0); }
.legend { border: 1px solid #d0d0d0; background: #fafafa; display: flex; flex-direction: column; justify-content: flex-end; padding: 0 3px 2px; }
.slider { height: 18px; background: #fff; display: grid; }
.slider > * { grid-area: 1 / 1; }
.slider i { width: 82px; background: #d4d4d4; border: 2px solid #a8a8a8; border-width: 0 2px; border-radius: 3px; }
.slider span { text-align: right; line-height: 19px; letter-spacing: .6px; color: #444; }

.sheets { height: 31px; flex: none; display: grid; grid-template-columns: 131px 59px 101px 200px 140px 144px 136px 160px 199px 32px 32px 32px; background: #e6e6e6; border-top: 1px solid #c8c8c8; border-bottom: 1px solid #c8c8c8; line-height: 29px; color: #666; letter-spacing: -.2px; white-space: nowrap; }
.sheets > div { border-right: 1px solid #c8c8c8; padding-left: 5px; overflow: hidden; }
.sheets .ds { display: flex; align-items: center; gap: 5px; padding-left: 9px; }
.sheets .cut { padding: 0 9px 0 0; display: flex; justify-content: flex-end; }
.sheets .on { background: #fafafa; font-weight: 600; color: #555; line-height: 28px; letter-spacing: -.07px; }
.sheets .rate { padding-left: 10px; }
.sheets .cum { padding-left: 8px; }
.sheets .add { padding: 6px 0 0 8px; }
.status { height: 20px; flex: none; background: #ebebeb; display: grid; grid-template-columns: 71px 106px 822px 127px 27px 27px 47px 1px 138px; line-height: 20px; font-size: 11px; white-space: nowrap; }
.status span:first-child { padding-left: 3px; }
.status span:nth-child(2) { padding-left: 3px; letter-spacing: -.15px; }
.status .sum { padding-left: 3px; }
.status i { border-left: 1px solid #ccc; }

.taskbar { height: 40px; background: #0b0c0e; display: flex; align-items: center; color: #fff; font-family: "Open Sans", sans-serif; }
.search { width: 344px; height: 40px; background: #f2f2f2; display: flex; align-items: center; padding: 0 15px 0 9px; }
.search span { flex: 1; padding-left: 9px; font-size: 15px; letter-spacing: -.53px; color: #333; }
.gap { width: 340px; }
.lang { width: 26px; margin-left: 3px; letter-spacing: -.3px; }
.clock { width: 77px; font-size: 12px; line-height: 18px; text-align: center; display: flex; flex-direction: column; letter-spacing: -.4px; }
.badge { fill: #fff; font: 11px "Open Sans", sans-serif; }

.showme { position: absolute; left: 1158px; top: 48px; width: 204px; filter: drop-shadow(2px 2px 2px rgba(0,0,0,.3)); }
.smtab { position: relative; z-index: 1; width: 111px; height: 37px; margin-left: 93px; background: #fafafa; border: 1px solid #d4d4d4; border-bottom: 0; display: flex; align-items: center; gap: 6px; padding: 0 0 7px 11px; font: 14px Roboto, sans-serif; letter-spacing: -.45px; color: #222; }
.smbody { margin-top: -1px; height: 556px; background: #fafafa; border: 1px solid #d4d4d4; padding: 14px 0 0 13px; }
.thumbs { display: grid; grid-template-columns: repeat(3, 56px); grid-auto-rows: 42px; gap: 4px; }
.thumbs > div { background: #fff; border: 1px solid #dcdcdc; overflow: hidden; }
.thumbs svg { width: 54px; height: 40px; }
.thumbs .sel { border: 2px solid #dd6b35; }
.thumbs .sel svg { margin: -1px; }
.num text { font: 5px "Liberation Sans", sans-serif; fill: #777; }
.pale text { fill: #bccfc5; }
.hint { padding: 18px 0 0 2px; letter-spacing: -.15px; }
.hint p b { font-weight: 600; color: #000; letter-spacing: -.2px; }
.req { display: flex; height: 20px; margin-top: 8px; align-items: center; }
.req:nth-child(2) { margin-top: 7px; }
.req > span { padding-top: 4px; }
.req .pill { letter-spacing: 0; padding-left: 10px; }
.req .g { color: #555; margin: 0 5px 0 6px; }
.w1 { width: 84px; } .w2 { width: 90px; margin-left: 2px; } .w3 { width: 79px; margin-left: 2px; }
.hint .note { margin-top: 12px; color: #999; letter-spacing: -.22px; }
```
